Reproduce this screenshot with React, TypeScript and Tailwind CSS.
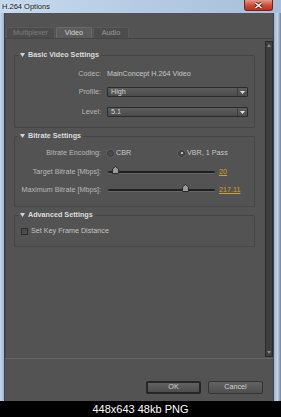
import React from 'react';

type SectionProps = { title: string; className?: string; children: React.ReactNode };

function Section({ title, className = '', children }: SectionProps) {
  return (
    <fieldset className={`border border-[#454545] rounded-[2px] ${className}`}>
      <legend className="ml-[3px] px-[2px]">
        <span className="flex items-center gap-[3px] h-[8px]">
          <svg width="5" height="4" viewBox="0 0 5 4">
            <path d="M0 0H5L2.5 4Z" fill="#d4d4d4" />
          </svg>
          <span className="font-bold text-[#dcdcdc] leading-[8px]">{title}</span>
        </span>
      </legend>
      {children}
    </fieldset>
  );
}

function Row({ label, className = '', children }: { label: string; className?: string; children: React.ReactNode }) {
  return (
    <div className={`flex items-center h-[10px] ${className}`}>
      <div className="w-[86px] text-right text-[#b9b9b9] leading-[10px] whitespace-nowrap">{label}</div>
      <div className="ml-[6px] flex-1 flex items-center">{children}</div>
    </div>
  );
}

function Select({ value }: { value: string }) {
  return (
    <div className="w-[141px] h-[10px] flex border border-[#2b2b2b] rounded-[1px] bg-linear-to-b from-[#5e5e5e] to-[#4b4b4b]">
      <span className="flex-1 pl-[3px] leading-[8px] text-[#d4d4d4]">{value}</span>
      <span className="w-[10px] border-l border-[#3b3b3b] flex items-center justify-center">
        <svg width="5" height="3" viewBox="0 0 5 3">
          <path d="M0 0H5L2.5 3Z" fill="#e2e2e2" />
        </svg>
      </span>
    </div>
  );
}

function Radio({ checked, label }: { checked?: boolean; label: string }) {
  return (
    <span className="flex items-center gap-[2px]">
      <span className="w-[7px] h-[7px] rounded-full border border-[#333333] bg-[#4c4c4c] flex items-center justify-center shadow-[0_0_0_0.5px_#6a6a6a]">
        {checked && <span className="w-[2px] h-[2px] rounded-full bg-[#dadada]" />}
      </span>
      <span className="text-[#c8c8c8] leading-[10px]">{label}</span>
    </span>
  );
}

function Slider({ pct, value }: { pct: number; value: string }) {
  return (
    <div className="flex items-center">
      <div className="relative w-[107px] h-[2px] ml-[1px] bg-[#202020] rounded-full shadow-[0_1px_0_#666666]">
        <div className="absolute top-[-5px]" style={{ left: `calc(${pct}% - 3px)` }}>
          <svg width="7" height="8" viewBox="0 0 7 8">
            <path d="M0.5 3L3.5 0.5L6.5 3V7.5H0.5Z" fill="#9a9a9a" stroke="#2a2a2a" strokeWidth="1" />
          </svg>
        </div>
      </div>
      <span className="ml-[4px] text-[#d49e2c] underline leading-[10px]">{value}</span>
    </div>
  );
}

function Tab({ label, selected, width, dim }: { label: string; selected?: boolean; width: string; dim?: boolean }) {
  return (
    <div
      className={`${width} h-[11px] flex items-center justify-center rounded-t-[2px] border border-b-0 ${
        selected
          ? 'bg-[#5b5b5b] border-[#6a6a6a] text-[#d6d6d6]'
          : dim
          ? 'bg-[#4c4c4c] border-[#5a5a5a] text-[#7d7d7d]'
          : 'bg-[#4c4c4c] border-[#5a5a5a] text-[#9c9c9c]'
      }`}
    >
      {label}
    </div>
  );
}

function Button({ label, primary }: { label: string; primary?: boolean }) {
  return (
    <div
      className={`w-[55px] h-[13px] flex items-center justify-center rounded-[2px] bg-linear-to-b from-[#626262] to-[#4d4d4d] text-[#d0d0d0] ${
        primary ? 'border-2 border-[#262626]' : 'border border-[#333333]'
      }`}
    >
      {label}
    </div>
  );
}

export default function App() {
  return (
    <div className="w-[281px] h-[417px] bg-black flex flex-col overflow-hidden font-['Liberation_Sans',Arial,sans-serif] text-[7.2px]">
      <div className="h-[401px] flex flex-col bg-[#a9c1db]">
        {/* title bar */}
        <div className="h-[13px] flex items-start bg-linear-to-r from-[#c6d9ee] via-[#b6cbe3] to-[#a8bfd9]">
          <span className="ml-[2px] mt-[2px] leading-[9px] text-[7.5px] text-[#111111] [text-shadow:0_0_3px_#ffffff]">H.264 Options</span>
          <div className="ml-auto mr-[8px] w-[29px] h-[11px] rounded-b-[3px] border border-t-0 border-[#6b261c] bg-linear-to-b from-[#e09a8c] via-[#cc4f3d] to-[#b9331f] flex items-center justify-center">
            <svg width="9" height="7" viewBox="0 0 9 7">
              <path d="M1.5 1L7.5 6M7.5 1L1.5 6" stroke="#5a1a12" strokeWidth="3" />
              <path d="M1.5 1L7.5 6M7.5 1L1.5 6" stroke="#ffffff" strokeWidth="1.5" />
            </svg>
          </div>
        </div>

        <div className="flex-1 flex">
          <div className="w-[5px] bg-linear-to-r from-[#c5d7ea] to-[#9fb8d3] border-r border-[#34404e]" />

          <div className="w-[268px] bg-[#535353] flex flex-col">
            <div className="h-[14px]" />
            <div className="h-[11px] flex items-end gap-[1px] ml-[1px]">
              <Tab label="Multiplexer" width="w-[49px]" dim />
              <Tab label="Video" width="w-[36px]" selected />
              <Tab label="Audio" width="w-[36px]" />
            </div>

            {/* tab panel */}
            <div className="h-[320px] border-t border-l border-[#444444] flex pt-[2px] pb-[1px]">
              <div className="flex-1 pl-[8px] pr-[10px] pt-[10px]">
                <Section title="Basic Video Settings">
                  <Row label="Codec:" className="mt-[10px]">
                    <span className="text-[#c8c8c8] leading-[10px] whitespace-nowrap">MainConcept H.264 Video</span>
                  </Row>
                  <Row label="Profile:" className="mt-[8px]">
                    <Select value="High" />
                  </Row>
                  <Row label="Level:" className="mt-[10px] mb-[10px]">
                    <Select value="5.1" />
                  </Row>
                </Section>

                <Section title="Bitrate Settings" className="mt-[4px]">
                  <Row label="Bitrate Encoding:" className="mt-[8px]">
                    <span className="w-[71px]">
                      <Radio label="CBR" />
                    </span>
                    <Radio label="VBR, 1 Pass" checked />
                  </Row>
                  <Row label="Target Bitrate [Mbps]:" className="mt-[9px]">
                    <Slider pct={7} value="20" />
                  </Row>
                  <Row label="Maximum Bitrate [Mbps]:" className="mt-[8px] mb-[11px]">
                    <Slider pct={72} value="217.11" />
                  </Row>
                </Section>

                <Section title="Advanced Settings" className="mt-[4px]">
                  <div className="mt-[7px] mb-[10px] h-[10px] pl-[6px] flex items-center gap-[3px]">
                    <span className="w-[7px] h-[7px] border border-[#2c2c2c] bg-[#4b4b4b]" />
                    <span className="text-[#c4c4c4] leading-[10px]">Set Key Frame Distance</span>
                  </div>
                </Section>
              </div>

              {/* scrollbar */}
              <div className="w-[8px] bg-[#3e3e3e] border border-[#2a2a2a] flex flex-col items-center justify-between py-[2px]">
                <svg width="4" height="3" viewBox="0 0 4 3">
                  <path d="M0 3H4L2 0Z" fill="#8c8c8c" />
                </svg>
                <svg width="4" height="3" viewBox="0 0 4 3">
                  <path d="M0 0H4L2 3Z" fill="#8c8c8c" />
                </svg>
              </div>
            </div>

            {/* footer */}
            <div className="flex-1 border-t border-[#636363] flex justify-end items-start gap-[7px] pt-[22px] pr-[10px]">
              <Button label="OK" primary />
              <Button label="Cancel" />
            </div>
          </div>

          <div className="w-[8px] bg-linear-to-r from-[#9db4cc] via-[#c4d3e3] to-[#6f859c] border-l border-[#3a4654]" />
        </div>
      </div>

      <div className="flex-1 flex items-center justify-center text-white text-[11px] leading-[16px]">448x643 48kb PNG</div>
    </div>
  );
}
